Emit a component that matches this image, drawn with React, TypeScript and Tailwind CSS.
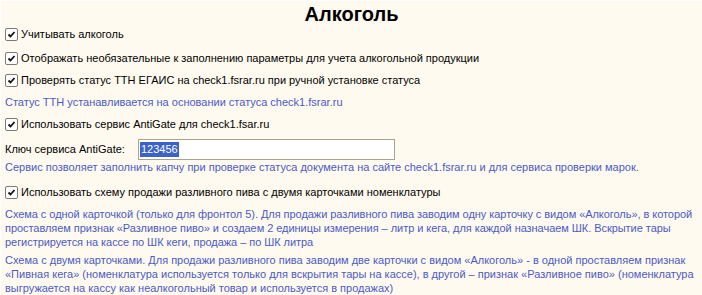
import React from "react";

const font = { fontFamily: '"Liberation Sans", Arial, sans-serif' };

function Check({ label }: { label: string }) {
  return (
    <div className="flex h-[22px] items-center text-[11px] text-black">
      <span className="ml-[4px] mr-[3px] flex h-[13px] w-[13px] items-center justify-center rounded-[2px] border border-[#7a7a7a] bg-white">
        <svg width="9" height="9" viewBox="0 0 9 9">
          <path d="M1.5 4.5 L3.5 6.5 L7.5 2" fill="none" stroke="#111" strokeWidth="1.8" />
        </svg>
      </span>
      <span>{label}</span>
    </div>
  );
}

export default function App() {
  return (
    <div
      className="h-[295px] w-[702px] overflow-hidden bg-[#fffaf0] border-l border-t border-white"
      style={font}
    >
      <div className="flex h-[22px] items-center justify-center pt-[3px] text-[20px] font-bold leading-none text-black">
        Алкоголь
      </div>

      <Check label="Учитывать алкоголь" />
      <div className="mt-[2px]">
        <Check label="Отображать необязательные к заполнению параметры для учета алкогольной продукции" />
      </div>
      <Check label="Проверять статус ТТН ЕГАИС на check1.fsrar.ru при ручной установке статуса" />
      <div className="flex h-[22px] items-center pl-[4px] text-[11px] text-[#4a5ac8]">
        Статус ТТН устанавливается на основании статуса check1.fsrar.ru
      </div>
      <Check label="Использовать сервис AntiGate для check1.fsar.ru" />

      <div className="mt-[3px] flex h-[22px] items-center pl-[4px] text-[11px] text-black">
        <span className="w-[133px]">Ключ сервиса AntiGate:</span>
        <div className="flex h-[21px] w-[257px] items-center border border-[#a8a48e] bg-white pl-[1px]">
          <span className="bg-[#3a62c8] px-[1px] leading-[15px] text-white">123456</span>
        </div>
      </div>
      <div className="flex h-[14px] items-center pl-[4px] text-[11px] text-[#4a5ac8]">
        Сервис позволяет заполнить капчу при проверке статуса документа на сайте check1.fsrar.ru и для сервиса проверки марок.
      </div>

      <div className="mt-[7px]">
        <Check label="Использовать схему продажи разливного пива с двумя карточками номенклатуры" />
      </div>

      <p className="mt-[4px] pl-[4px] text-[11px] leading-[14px] tracking-[-0.05px] text-[#4a5ac8]">
        Схема с одной карточкой (только для фронтол 5). Для продажи разливного пива заводим одну карточку с видом «Алкоголь», в которой проставляем признак «Разливное пиво» и создаем 2 единицы измерения – литр и кега, для каждой назначаем ШК. Вскрытие тары регистрируется на кассе по ШК кеги, продажа – по ШК литра
      </p>
      <p className="mt-[4px] pl-[4px] pr-[4px] text-[11px] leading-[14px] text-[#4a5ac8]">
        Схема с двумя карточками. Для продажи разливного пива заводим две карточки с видом «Алкоголь» - в одной проставляем признак «Пивная кега» (номенклатура используется только для вскрытия тары на кассе), в другой – признак «Разливное пиво» (номенклатура выгружается на кассу как неалкогольный товар и используется в продажах)
      </p>
    </div>
  );
}
